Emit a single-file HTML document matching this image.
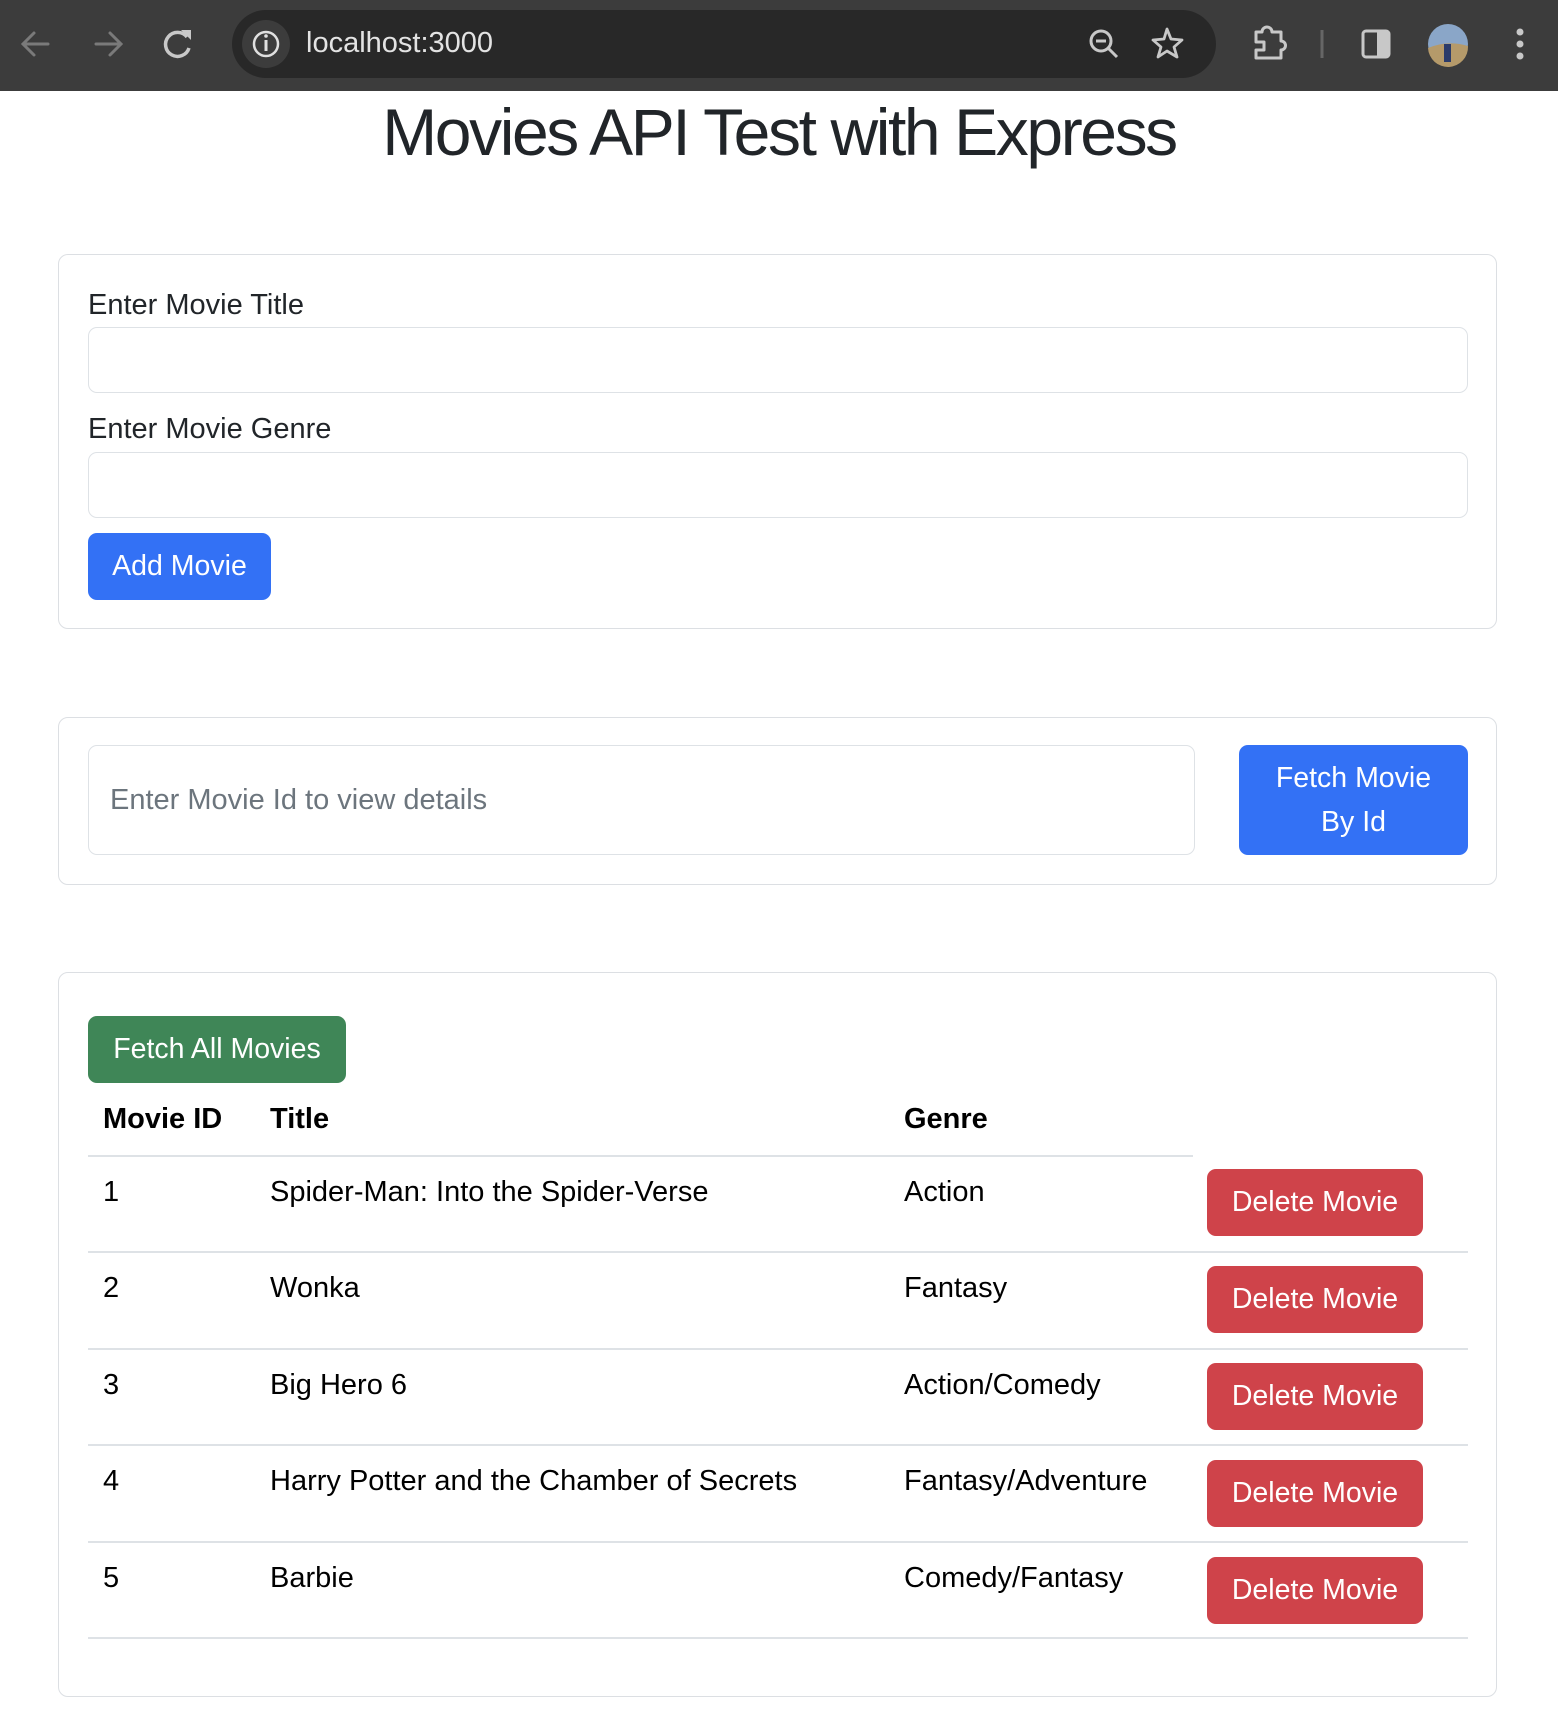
<!DOCTYPE html>
<html><head><meta charset="utf-8"><style>
*{box-sizing:border-box;margin:0;padding:0}
body{width:1558px;height:1726px;background:#fff;font-family:"Liberation Sans",Helvetica,Arial,sans-serif;color:#212529;position:relative;overflow:hidden}
.a{position:absolute}
.bar{left:0;top:0;width:1558px;height:91px;background:#3c3c3c}
.omni{left:232px;top:10px;width:984px;height:68px;background:#282828;border-radius:34px}
.card{left:58px;width:1439px;border:1.5px solid #dcdfe3;border-radius:10px}
.inp{border:1.5px solid #dee2e6;border-radius:9px;background:#fff}
.btn{color:#fff;border-radius:9px;font-size:28.5px;display:flex;align-items:center;justify-content:center;text-align:center}
.blue{background:#3371f5}
.red{background:#cf434a}
.lbl{font-size:29px;color:#212529}
.t{font-size:29px;color:#000}
.b{font-weight:bold}
.line{left:88px;width:1380px;height:1.5px;background:#dee2e6}
</style></head><body>
<div class="a bar"></div>
<div class="a omni"></div>
<svg class="a" style="left:0;top:0" width="1558" height="91">
 <g stroke="#7a7a7a" stroke-width="3" fill="none" stroke-linecap="round">
  <path d="M48 44H24M34 33L23 44L34 55"/>
  <path d="M96 44H120M110 33L121 44L110 55"/>
 </g>
 <path d="M187 37A12 12 0 1 0 189 48" stroke="#c8c8c8" stroke-width="3.5" fill="none"/>
 <path d="M181 30L191 30L191 40Z" fill="#c8c8c8"/>
 <circle cx="266" cy="44" r="24" fill="#3c3c3c"/>
 <circle cx="266" cy="44" r="12" stroke="#e0e0e0" stroke-width="2.5" fill="none"/>
 <path d="M266 40V51" stroke="#e0e0e0" stroke-width="3"/><circle cx="266" cy="36" r="1.8" fill="#e0e0e0"/>
 <circle cx="1101" cy="41" r="10" stroke="#c8c8c8" stroke-width="3" fill="none"/>
 <path d="M1096 41H1106M1108 48L1117 57" stroke="#c8c8c8" stroke-width="3"/>
 <path d="M1167 29L1171 39L1182 40L1174 47L1177 57L1167 51L1158 57L1161 47L1153 40L1164 39Z" stroke="#c8c8c8" stroke-width="2.8" fill="none" stroke-linejoin="round"/>
 <path d="M1256 32H1262A5 5 0 0 1 1272 32H1281V41A4 4 0 0 1 1281 50V58H1256V50H1264V42H1256Z" stroke="#c8c8c8" stroke-width="3" fill="none" stroke-linejoin="round"/>
 <path d="M1322 30V58" stroke="#666" stroke-width="3"/>
 <rect x="1363" y="31" width="26" height="26" rx="3" stroke="#c8c8c8" stroke-width="3" fill="none"/>
 <rect x="1377" y="31" width="12" height="26" fill="#c8c8c8"/>
 <circle cx="1448" cy="44" r="20" fill="#8aa6c8"/>
 <path d="M1428 48Q1448 40 1468 46A20 20 0 0 1 1428 48Z" fill="#b59a6a"/>
 <rect x="1444" y="44" width="7" height="18" fill="#2b3b6a"/>
 <circle cx="1520" cy="32" r="3.5" fill="#c8c8c8"/><circle cx="1520" cy="44" r="3.5" fill="#c8c8c8"/><circle cx="1520" cy="56" r="3.5" fill="#c8c8c8"/>
</svg>
<div class="a" style="left:306px;top:27px;font-size:29px;color:#e3e3e3">localhost:3000</div>

<div class="a" style="left:0;width:1558px;top:92px;text-align:center;font-size:66px;letter-spacing:-2.4px;line-height:80px;color:#212529">Movies API Test with Express</div>

<div class="a card" style="top:254px;height:375px"></div>
<div class="a lbl" style="left:88px;top:289px">Enter Movie Title</div>
<div class="a inp" style="left:88px;top:327px;width:1380px;height:66px"></div>
<div class="a lbl" style="left:88px;top:413px">Enter Movie Genre</div>
<div class="a inp" style="left:88px;top:452px;width:1380px;height:66px"></div>
<div class="a btn blue" style="left:88px;top:533px;width:183px;height:67px">Add Movie</div>

<div class="a card" style="top:717px;height:168px"></div>
<div class="a inp" style="left:88px;top:745px;width:1107px;height:110px"></div>
<div class="a" style="left:110px;top:784px;font-size:29px;color:#6c757d">Enter Movie Id to view details</div>
<div class="a btn blue" style="left:1239px;top:745px;width:229px;height:110px;line-height:44px">Fetch Movie<br>By Id</div>

<div class="a card" style="top:972px;height:725px"></div>
<div class="a btn" style="left:88px;top:1016px;width:258px;height:67px;background:#3f8657">Fetch All Movies</div>
<div class="a t b" style="left:103px;top:1103px">Movie ID</div>
<div class="a t b" style="left:270px;top:1103px">Title</div>
<div class="a t b" style="left:904px;top:1103px">Genre</div>
<div class="a line" style="width:1105px;top:1155px"></div>

<div class="a t" style="left:103px;top:1176px">1</div><div class="a t" style="left:270px;top:1176px">Spider-Man: Into the Spider-Verse</div><div class="a t" style="left:904px;top:1176px">Action</div>
<div class="a btn red" style="left:1207px;top:1169px;width:216px;height:67px">Delete Movie</div>
<div class="a line" style="top:1251px"></div>

<div class="a t" style="left:103px;top:1272px">2</div><div class="a t" style="left:270px;top:1272px">Wonka</div><div class="a t" style="left:904px;top:1272px">Fantasy</div>
<div class="a btn red" style="left:1207px;top:1266px;width:216px;height:67px">Delete Movie</div>
<div class="a line" style="top:1348px"></div>

<div class="a t" style="left:103px;top:1369px">3</div><div class="a t" style="left:270px;top:1369px">Big Hero 6</div><div class="a t" style="left:904px;top:1369px">Action/Comedy</div>
<div class="a btn red" style="left:1207px;top:1363px;width:216px;height:67px">Delete Movie</div>
<div class="a line" style="top:1444px"></div>

<div class="a t" style="left:103px;top:1465px">4</div><div class="a t" style="left:270px;top:1465px">Harry Potter and the Chamber of Secrets</div><div class="a t" style="left:904px;top:1465px">Fantasy/Adventure</div>
<div class="a btn red" style="left:1207px;top:1460px;width:216px;height:67px">Delete Movie</div>
<div class="a line" style="top:1541px"></div>

<div class="a t" style="left:103px;top:1562px">5</div><div class="a t" style="left:270px;top:1562px">Barbie</div><div class="a t" style="left:904px;top:1562px">Comedy/Fantasy</div>
<div class="a btn red" style="left:1207px;top:1557px;width:216px;height:67px">Delete Movie</div>
<div class="a line" style="top:1637px"></div>
</body></html>
